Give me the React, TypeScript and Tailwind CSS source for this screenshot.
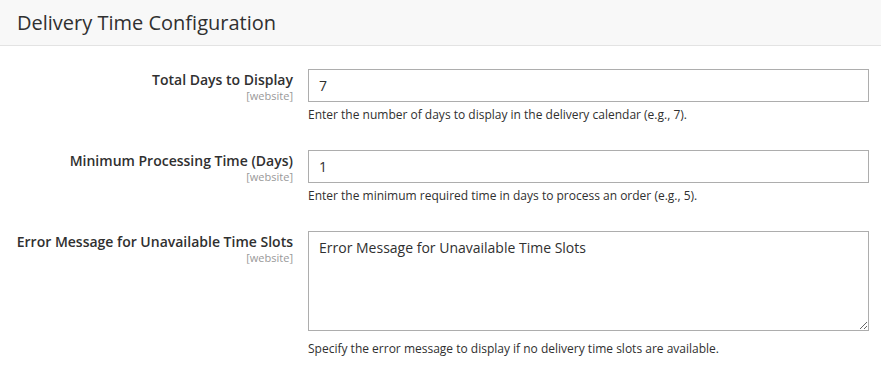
import type { ReactNode } from 'react';

const font = { fontFamily: '"Open Sans", "Noto Sans", sans-serif' };

function Row({
  label,
  children,
  help,
  helpGap = 'mt-1',
}: {
  label: string;
  children: ReactNode;
  help: string;
  helpGap?: string;
}) {
  return (
    <div className="flex">
      <div className="w-[293px] shrink-0 text-right">
        <div className="text-[14px] leading-[19px] font-semibold text-[#303030] pt-[1px]">{label}</div>
        <div className="text-[11px] leading-[14px] text-[#999999]">[website]</div>
      </div>
      <div className="ml-[15px] mr-[12px] flex-1">
        {children}
        <div className={'text-[12px] leading-[18px] text-[#303030] ' + helpGap}>{help}</div>
      </div>
    </div>
  );
}

export default function App() {
  return (
    <div className="w-[881px] h-[371px] bg-white overflow-hidden" style={font}>
      <div className="h-[46px] bg-[#f8f8f8] border-b border-[#e3e3e3] flex items-center px-[17px]">
        <h2 className="text-[20px] text-[#303030] font-normal leading-none">Delivery Time Configuration</h2>
      </div>
      <div className="pt-[23px] flex flex-col gap-[26px]">
        <Row
          label="Total Days to Display"
          help="Enter the number of days to display in the delivery calendar (e.g., 7)."
        >
          <input
            defaultValue="7"
            className="block w-full h-[33px] border border-[#adadad] px-[10px] text-[14px] text-[#303030] outline-none"
          />
        </Row>
        <Row
          label="Minimum Processing Time (Days)"
          help="Enter the minimum required time in days to process an order (e.g., 5)."
        >
          <input
            defaultValue="1"
            className="block w-full h-[33px] border border-[#adadad] px-[10px] text-[14px] text-[#303030] outline-none"
          />
        </Row>
        <Row
          label="Error Message for Unavailable Time Slots"
          help="Specify the error message to display if no delivery time slots are available."
          helpGap="mt-[9px]"
        >
          <textarea
            defaultValue="Error Message for Unavailable Time Slots"
            className="block w-full h-[100px] border border-[#adadad] px-[10px] py-[6px] text-[14px] leading-[19px] text-[#303030] outline-none"
          />
        </Row>
      </div>
    </div>
  );
}
